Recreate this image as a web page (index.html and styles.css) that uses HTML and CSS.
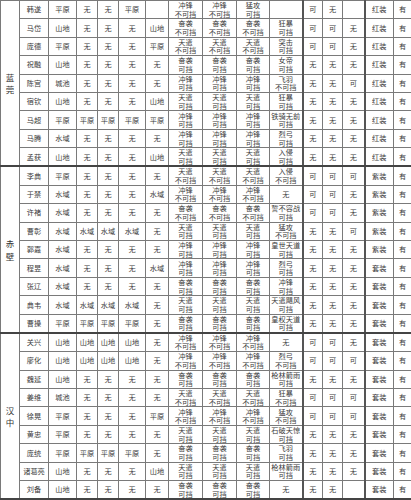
FILE: index.html
```html
<!DOCTYPE html>
<html lang="zh">
<head>
<meta charset="utf-8">
<link rel="stylesheet" href="styles.css">
</head>
<body>
<table class="t">
<colgroup>
<col class="c-g"><col class="c-n"><col class="c-a"><col class="c-b"><col class="c-b"><col class="c-a2"><col class="c-b2">
<col class="c-s"><col class="c-s"><col class="c-s2"><col class="c-s2">
<col class="c-k"><col class="c-k"><col class="c-k2"><col class="c-e"><col class="c-h">
</colgroup>
<tbody class="grp">
<tr class="first"><td class="g" rowspan="9">蓝<br>莞</td><td>韩遂</td><td>平原</td><td>无</td><td>无</td><td>平原</td><td></td><td>冲锋<br>不可挡</td><td>冲锋<br>不可挡</td><td>猛攻<br>可挡</td><td></td><td class="k">可</td><td>无</td><td></td><td class="e">红装</td><td>有</td></tr>
<tr><td>马岱</td><td>山地</td><td>无</td><td>无</td><td>无</td><td>山地</td><td>奋袭<br>不可挡</td><td>奋袭<br>不可挡</td><td>奋袭<br>不可挡</td><td>狂暴<br>可挡</td><td class="k">可</td><td>可</td><td>无</td><td class="e">红装</td><td>有</td></tr>
<tr><td>庞德</td><td>平原</td><td>无</td><td>无</td><td>无</td><td>平原</td><td>天遣<br>不可挡</td><td>天遣<br>不可挡</td><td>天遣<br>不可挡</td><td>突击<br>可挡</td><td class="k">可</td><td>可</td><td>无</td><td class="e">红装</td><td>有</td></tr>
<tr><td>祝融</td><td>山地</td><td>无</td><td>无</td><td>无</td><td>无</td><td>奋袭<br>可挡</td><td>奋袭<br>可挡</td><td>奋袭<br>可挡</td><td>女帝<br>可挡</td><td class="k">无</td><td>无</td><td>无</td><td class="e">红装</td><td>有</td></tr>
<tr><td>陈宫</td><td>城池</td><td>无</td><td>无</td><td>无</td><td>无</td><td>冲锋<br>可挡</td><td>冲锋<br>可挡</td><td>冲锋<br>可挡</td><td>飞羽<br>不可挡</td><td class="k">无</td><td>无</td><td>可</td><td class="e">红装</td><td>有</td></tr>
<tr><td>宿钦</td><td>山地</td><td>无</td><td>无</td><td>无</td><td>山地</td><td>天遣<br>可挡</td><td>天遣<br>可挡</td><td>天遣<br>可挡</td><td>狂暴<br>可挡</td><td class="k">无</td><td>无</td><td>无</td><td class="e">红装</td><td>有</td></tr>
<tr><td>马超</td><td>平原</td><td>平原</td><td>平原</td><td>平原</td><td>平原</td><td>冲锋<br>可挡</td><td>冲锋<br>可挡</td><td>冲锋<br>可挡</td><td>铁骑无前<br>可挡</td><td class="k">无</td><td>无</td><td>无</td><td class="e">红装</td><td>有</td></tr>
<tr><td>马腾</td><td>水域</td><td>无</td><td>无</td><td>无</td><td>无</td><td>冲锋<br>可挡</td><td>冲锋<br>可挡</td><td>冲锋<br>可挡</td><td>烈弓<br>可挡</td><td class="k">无</td><td>无</td><td>无</td><td class="e">红装</td><td>有</td></tr>
<tr class="last"><td>孟获</td><td>山地</td><td>无</td><td>无</td><td>无</td><td>山地</td><td>天遣<br>可挡</td><td>天遣<br>可挡</td><td>天遣<br>可挡</td><td>入侵<br>可挡</td><td class="k">无</td><td>无</td><td>无</td><td class="e">红装</td><td>有</td></tr>
</tbody>
<tbody class="grp">
<tr><td class="g" rowspan="9">赤<br>壁</td><td>李典</td><td>平原</td><td>无</td><td>无</td><td>无</td><td>无</td><td>天遣<br>不可挡</td><td>天遣<br>不可挡</td><td>天遣<br>不可挡</td><td>入侵<br>不可挡</td><td class="k">可</td><td>可</td><td>可</td><td class="e">紫装</td><td>有</td></tr>
<tr><td>于禁</td><td>水域</td><td>无</td><td>无</td><td>无</td><td>水域</td><td>冲锋<br>不可挡</td><td>冲锋<br>不可挡</td><td>冲锋<br>不可挡</td><td>无</td><td class="k">可</td><td>可</td><td>无</td><td class="e">紫装</td><td>有</td></tr>
<tr><td>许褚</td><td>水域</td><td>无</td><td>无</td><td>无</td><td>无</td><td>奋袭<br>不可挡</td><td>奋袭<br>不可挡</td><td>奋袭<br>不可挡</td><td>誓不容战<br>可挡</td><td class="k">可</td><td>可</td><td>无</td><td class="e">紫装</td><td>有</td></tr>
<tr><td>曹彰</td><td>水域</td><td>水域</td><td>水域</td><td>水域</td><td>无</td><td>天遣<br>可挡</td><td>天遣<br>可挡</td><td>天遣<br>可挡</td><td>猛攻<br>不可挡</td><td class="k">无</td><td>无</td><td>可</td><td class="e">紫装</td><td>有</td></tr>
<tr><td>郭嘉</td><td>水域</td><td>无</td><td>无</td><td>无</td><td>无</td><td>冲锋<br>可挡</td><td>冲锋<br>可挡</td><td>冲锋<br>可挡</td><td>皇世天道<br>可挡</td><td class="k">无</td><td>无</td><td>无</td><td class="e">紫装</td><td>有</td></tr>
<tr><td>程昱</td><td>水域</td><td>无</td><td>无</td><td>无</td><td>水域</td><td>冲锋<br>可挡</td><td>冲锋<br>可挡</td><td>冲锋<br>可挡</td><td>烈弓<br>可挡</td><td class="k">无</td><td>无</td><td>无</td><td class="e">套装</td><td>有</td></tr>
<tr><td>张辽</td><td>水域</td><td>无</td><td>无</td><td>无</td><td>无</td><td>奋袭<br>可挡</td><td>奋袭<br>可挡</td><td>奋袭<br>可挡</td><td>冲锋<br>可挡</td><td class="k">无</td><td>无</td><td>无</td><td class="e">套装</td><td>有</td></tr>
<tr><td>典韦</td><td>水域</td><td>水域</td><td>水域</td><td>水域</td><td>无</td><td>天遣<br>可挡</td><td>天遣<br>可挡</td><td>天遣<br>可挡</td><td>天遣飓风<br>可挡</td><td class="k">无</td><td>无</td><td>无</td><td class="e">套装</td><td>有</td></tr>
<tr class="last"><td>曹操</td><td>平原</td><td>平原</td><td>平原</td><td>平原</td><td>无</td><td>奋袭<br>可挡</td><td>奋袭<br>可挡</td><td>奋袭<br>可挡</td><td>皇权天道<br>可挡</td><td class="k">无</td><td>无</td><td>无</td><td class="e">套装</td><td>有</td></tr>
</tbody>
<tbody class="grp">
<tr><td class="g" rowspan="9">汉<br>中</td><td>关兴</td><td>山地</td><td>山地</td><td>山地</td><td>山地</td><td>无</td><td>冲锋<br>不可挡</td><td>冲锋<br>不可挡</td><td>冲锋<br>不可挡</td><td>无</td><td class="k">可</td><td>可</td><td>无</td><td class="e">套装</td><td>有</td></tr>
<tr><td>廖化</td><td>山地</td><td>山地</td><td>山地</td><td>山地</td><td>无</td><td>冲锋<br>不可挡</td><td>冲锋<br>不可挡</td><td>冲锋<br>不可挡</td><td>烈弓<br>不可挡</td><td class="k">可</td><td>可</td><td>可</td><td class="e">套装</td><td>有</td></tr>
<tr><td>魏延</td><td>山地</td><td>无</td><td>无</td><td>无</td><td>无</td><td>奋袭<br>可挡</td><td>奋袭<br>可挡</td><td>奋袭<br>可挡</td><td>枪林箭雨<br>可挡</td><td class="k">无</td><td>无</td><td>无</td><td class="e">套装</td><td>有</td></tr>
<tr><td>姜维</td><td>城池</td><td>无</td><td>无</td><td>无</td><td>无</td><td>天遣<br>不可挡</td><td>天遣<br>不可挡</td><td>天遣<br>不可挡</td><td>狂暴<br>不可挡</td><td class="k">可</td><td>可</td><td>可</td><td class="e">套装</td><td>有</td></tr>
<tr><td>徐晃</td><td>平原</td><td>无</td><td>无</td><td>无</td><td>平原</td><td>冲锋<br>不可挡</td><td>冲锋<br>不可挡</td><td>冲锋<br>不可挡</td><td>猛攻<br>不可挡</td><td class="k">可</td><td>可</td><td>可</td><td class="e">套装</td><td>有</td></tr>
<tr><td>黄忠</td><td>平原</td><td>无</td><td>无</td><td>无</td><td>无</td><td>天遣<br>可挡</td><td>天遣<br>可挡</td><td>天遣<br>可挡</td><td>石破天惊<br>可挡</td><td class="k">无</td><td>无</td><td>无</td><td class="e">套装</td><td>有</td></tr>
<tr><td>庞统</td><td>平原</td><td>平原</td><td>平原</td><td>平原</td><td>无</td><td>奋袭<br>可挡</td><td>奋袭<br>可挡</td><td>奋袭<br>可挡</td><td>飞羽<br>可挡</td><td class="k">无</td><td>无</td><td>无</td><td class="e">套装</td><td>有</td></tr>
<tr><td>诸葛亮</td><td>山地</td><td>无</td><td>无</td><td>无</td><td>山地</td><td>天遣<br>可挡</td><td>天遣<br>可挡</td><td>天遣<br>可挡</td><td>枪林箭雨<br>可挡</td><td class="k">无</td><td>无</td><td>无</td><td class="e">套装</td><td>有</td></tr>
<tr class="last"><td>刘备</td><td>山地</td><td>无</td><td>无</td><td>无</td><td>无</td><td>奋袭<br>可挡</td><td>奋袭<br>可挡</td><td>奋袭<br>可挡</td><td>无</td><td class="k">无</td><td>无</td><td></td><td class="e">套装</td><td>有</td></tr>
</tbody>
</table>
</body>
</html>
```
FILE: styles.css
```css
html, body {
  margin: 0;
  padding: 0;
  background: #ffffff;
}
body {
  width: 411px;
  height: 500px;
  overflow: hidden;
}
.t {
  table-layout: fixed;
  border-collapse: collapse;
  width: 411px;
  font-family: "Noto Sans CJK SC", "Noto Sans", sans-serif;
  font-size: 7.2px;
  line-height: 8.6px;
  color: #3a3a3a;
}
.c-g { width: 19px; }
.c-n { width: 29px; }
.c-a { width: 28px; }
.c-b { width: 21px; }
.c-a2 { width: 27px; }
.c-b2 { width: 23px; }
.c-s { width: 34px; }
.c-s2 { width: 33px; }
.c-k { width: 20px; }
.c-k2 { width: 22px; }
.c-e { width: 29px; }
.c-h { width: 18px; }
.t td {
  border: 1px solid #7a7a7a;
  padding: 0;
  text-align: center;
  vertical-align: middle;
  overflow: hidden;
  white-space: nowrap;
}
.t tr {
  height: 18.45px;
}
.t tr.first {
  height: 17px;
}
.t td.g {
  font-size: 8.5px;
  line-height: 12.6px;
  color: #333;
}
.t td.k {
  border-left: 2px solid #555;
}
.t td.e {
  border-left: 2px solid #555;
}
.grp tr.last td,
.t td.g {
  border-bottom: 2px solid #444;
}
```
